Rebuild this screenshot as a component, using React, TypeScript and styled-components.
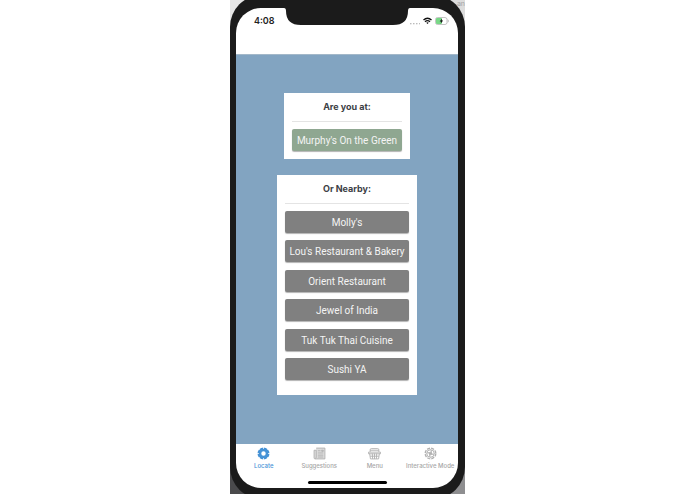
import React from "react";
import styled, { createGlobalStyle } from "styled-components";

const GlobalStyle = createGlobalStyle`
  *, *::before, *::after { box-sizing: border-box; }
  body {
    margin: 0;
    background: #fff;
    font-family: Inter, "Liberation Sans", sans-serif;
    color: #3c4045;
  }
  button { font: inherit; border: 0; margin: 0; cursor: pointer; }
`;

const Page = styled.div`
  min-height: 100vh;
  display: flex;
  justify-content: center;
`;

const Backdrop = styled.div`
  position: relative;
  display: flex;
  width: 100%;
  max-width: 235px;
  overflow: hidden;
  background:
    linear-gradient(#e6e6e6, #e6e6e6) top left / 50% 50% no-repeat,
    linear-gradient(#dcdcdc, #dcdcdc) top right / 50% 50% no-repeat,
    linear-gradient(#4a4a4c, #4a4a4c) bottom left / 50% 50% no-repeat,
    #8e8e90;
`;

const BackdropText = styled.span`
  position: absolute;
  top: 0;
  right: 0;
  font-size: 7px;
  line-height: 8px;
  color: #a4a4a4;
`;

const Phone = styled.div`
  position: relative;
  flex: 1;
  display: flex;
  margin: -5px 0;
  padding: 13px 7px 11px 6px;
  background: #1b1b1b;
  border-radius: 32px;
`;

const Screen = styled.div`
  flex: 1;
  display: flex;
  flex-direction: column;
  min-width: 0;
  overflow: hidden;
  background: #fff;
  border-radius: 25px;
`;

const StatusBar = styled.header`
  display: grid;
  grid-template-columns: 1fr 126px 1fr;
  height: 46px;
`;

const Clock = styled.time`
  margin: 7px 0 0 18px;
  font-size: 9px;
  line-height: 12px;
  font-weight: 600;
  color: #222;
`;

const NotchShape = styled.svg`
  display: block;
  width: 126px;
  height: 17px;
`;

const StatusIcons = styled.div`
  display: flex;
  justify-content: flex-end;
  align-items: center;
  gap: 3px;
  height: 12px;
  margin: 7px 9px 0 0;
  svg { flex: none; }
`;

const Main = styled.main`
  flex: 1;
  display: flex;
  flex-direction: column;
  align-items: center;
  gap: 16px;
  padding: 38px 8px;
  border-top: 1px solid #a3b8c9;
  background: #82a4c1;
`;

const Card = styled.section<{ $width: number }>`
  width: ${({ $width }) => $width}px;
  padding: 8px;
  background: #fff;
`;

const CardTitle = styled.h2`
  margin: 0 0 7px;
  padding-bottom: 8px;
  border-bottom: 1px solid #e4e4e4;
  text-align: center;
  font-size: 9px;
  line-height: 12px;
  font-weight: 700;
`;

const PlaceList = styled.div`
  display: flex;
  flex-direction: column;
  justify-content: space-between;
  height: 169px;
  margin-bottom: 7px;
`;

const PlaceButton = styled.button<{ $primary?: boolean }>`
  display: block;
  width: 100%;
  height: 22px;
  padding: 2px 0 0;
  border-radius: 2px;
  background: ${({ $primary }) => ($primary ? "#8fa791" : "#808080")};
  box-shadow: 0 1px 1px rgba(0, 0, 0, 0.3);
  color: #f4f4f4;
  font-family: Roboto, "Liberation Sans", sans-serif;
  font-size: 10px;
  line-height: 20px;
  white-space: nowrap;
`;

const TabBar = styled.nav`
  display: grid;
  grid-template-columns: repeat(4, 1fr);
  height: 36px;
`;

const Tab = styled.button<{ $active?: boolean }>`
  display: flex;
  flex-direction: column;
  align-items: center;
  gap: 2px;
  padding: 3px 0 0;
  background: none;
  color: ${({ $active }) => ($active ? "#4592d6" : "#a6a6a6")};
  font-size: 6px;
  line-height: 8px;
  font-weight: 500;
  white-space: nowrap;
  svg { display: block; flex: none; }
`;

const HomeIndicator = styled.div`
  width: 79px;
  height: 3px;
  margin: 1px auto 4px;
  border-radius: 2px;
  background: #000;
`;

const Notch = () => (
  <NotchShape viewBox="0 0 126 17" aria-hidden="true">
    <path d="M0 0H126Q124 0 124 3Q124 17 109 17H17Q2 17 2 3Q2 0 0 0Z" fill="#1b1b1b" />
  </NotchShape>
);

const Signal = () => (
  <svg width="10" height="12" viewBox="0 0 10 12" aria-hidden="true" fill="#bbb">
    {[0, 3, 6, 9].map((x) => <rect key={x} x={x} y="8" width="1.500" height="1.300" />)}
  </svg>
);

const Wifi = () => (
  <svg width="9" height="8" viewBox="0 0 18 14" aria-hidden="true" fill="none" stroke="#111" strokeWidth="2.8">
    <path d="M1 5Q9-2 17 5M4 8.500Q9 4 14 8.500" />
    <path d="M6.500 10.500Q9 8.500 11.500 10.500L9 13Z" fill="#111" stroke="none" />
  </svg>
);

const Battery = () => (
  <svg width="14" height="8" viewBox="0 0 14 8" aria-hidden="true">
    <rect x=".5" y=".5" width="11.500" height="7" rx="2" fill="#fff" stroke="#aaa" strokeWidth=".7" />
    <rect x="1" y="1" width="6" height="6" rx="1" fill="#79d887" />
    <path d="M7 1.500L4.700 4.400H6.200L5.700 6.500L8.200 3.600H6.700Z" fill="#111" />
    <path d="M12.900 2.700q1 1.300 0 2.600" fill="none" stroke="#aaa" strokeWidth=".8" />
  </svg>
);

const LocateIcon = () => (
  <svg width="13" height="13" viewBox="0 0 24 24" aria-hidden="true" fill="none" stroke="currentColor">
    <circle cx="12" cy="12" r="7.600" strokeWidth="7" />
    <path d="M12 0v3.500M12 20.500V24M0 12h3.500M20.500 12H24" stroke="#fff" strokeWidth="1.500" />
    <path d="M3.500 3.500l2 2M18.500 18.500l2 2M3.500 20.500l2-2M18.500 5.500l2-2" stroke="#fff" strokeWidth="1.200" />
  </svg>
);

const NewsIcon = () => (
  <svg width="13" height="13" viewBox="0 0 24 24" aria-hidden="true" fill="none" stroke="#b0b0b0" strokeWidth="1.700">
    <path d="M6 2h16v20H4q-2 0-2-2V6h4v13q0 2-2 2" fill="#ddd" />
    <path d="M9 7h5M9 11h10M9 15h10M9 18.500h10M16 6h3v2h-3z" />
  </svg>
);

const BasketIcon = () => (
  <svg width="13" height="13" viewBox="0 0 24 24" aria-hidden="true" fill="none" stroke="#b0b0b0" strokeWidth="1.700">
    <path d="M4 9V5q0-2 2-2h12q2 0 2 2v4M4 6h16M1 9.500h22v3H1zM3 12l1.500 10h15L21 12M8 12l.5 10M12 12v10M16 12l-.5 10M4 17h16" />
  </svg>
);

const ApertureIcon = () => (
  <svg width="13" height="13" viewBox="0 0 24 24" aria-hidden="true" fill="none" stroke="#b0b0b0" strokeWidth="1.800">
    <circle cx="12" cy="12" r="9.800" strokeDasharray="5.700 2" strokeWidth="2.500" />
    <circle cx="12" cy="12" r="7" />
    <circle cx="12" cy="12" r="2.500" fill="#b0b0b0" />
    <path d="M12 5q3 2 1 5M19 12q-2 3-5 1M12 19q-3-2-1-5M5 12q2-3 5-1" />
  </svg>
);

const nearby = [
  "Molly's",
  "Lou's Restaurant & Bakery",
  "Orient Restaurant",
  "Jewel of India",
  "Tuk Tuk Thai Cuisine",
  "Sushi YA",
];

const tabs = [
  { label: "Locate", Icon: LocateIcon },
  { label: "Suggestions", Icon: NewsIcon },
  { label: "Menu", Icon: BasketIcon },
  { label: "Interactive Mode", Icon: ApertureIcon },
];

export default function App() {
  return (
    <Page>
      <GlobalStyle />
      <Backdrop>
        <BackdropText>an</BackdropText>
        <Phone>
          <Screen>
            <StatusBar>
              <Clock>4:08</Clock>
              <Notch />
              <StatusIcons>
                <Signal />
                <Wifi />
                <Battery />
              </StatusIcons>
            </StatusBar>
            <Main>
              <Card $width={126}>
                <CardTitle>Are you at:</CardTitle>
                <PlaceButton $primary>Murphy's On the Green</PlaceButton>
              </Card>
              <Card $width={140}>
                <CardTitle>Or Nearby:</CardTitle>
                <PlaceList>
                  {nearby.map((name) => <PlaceButton key={name}>{name}</PlaceButton>)}
                </PlaceList>
              </Card>
            </Main>
            <TabBar>
              {tabs.map(({ label, Icon }, index) => (
                <Tab key={label} $active={index === 0} aria-current={index === 0 ? "page" : undefined}>
                  <Icon />
                  {label}
                </Tab>
              ))}
            </TabBar>
            <HomeIndicator />
          </Screen>
        </Phone>
      </Backdrop>
    </Page>
  );
}
